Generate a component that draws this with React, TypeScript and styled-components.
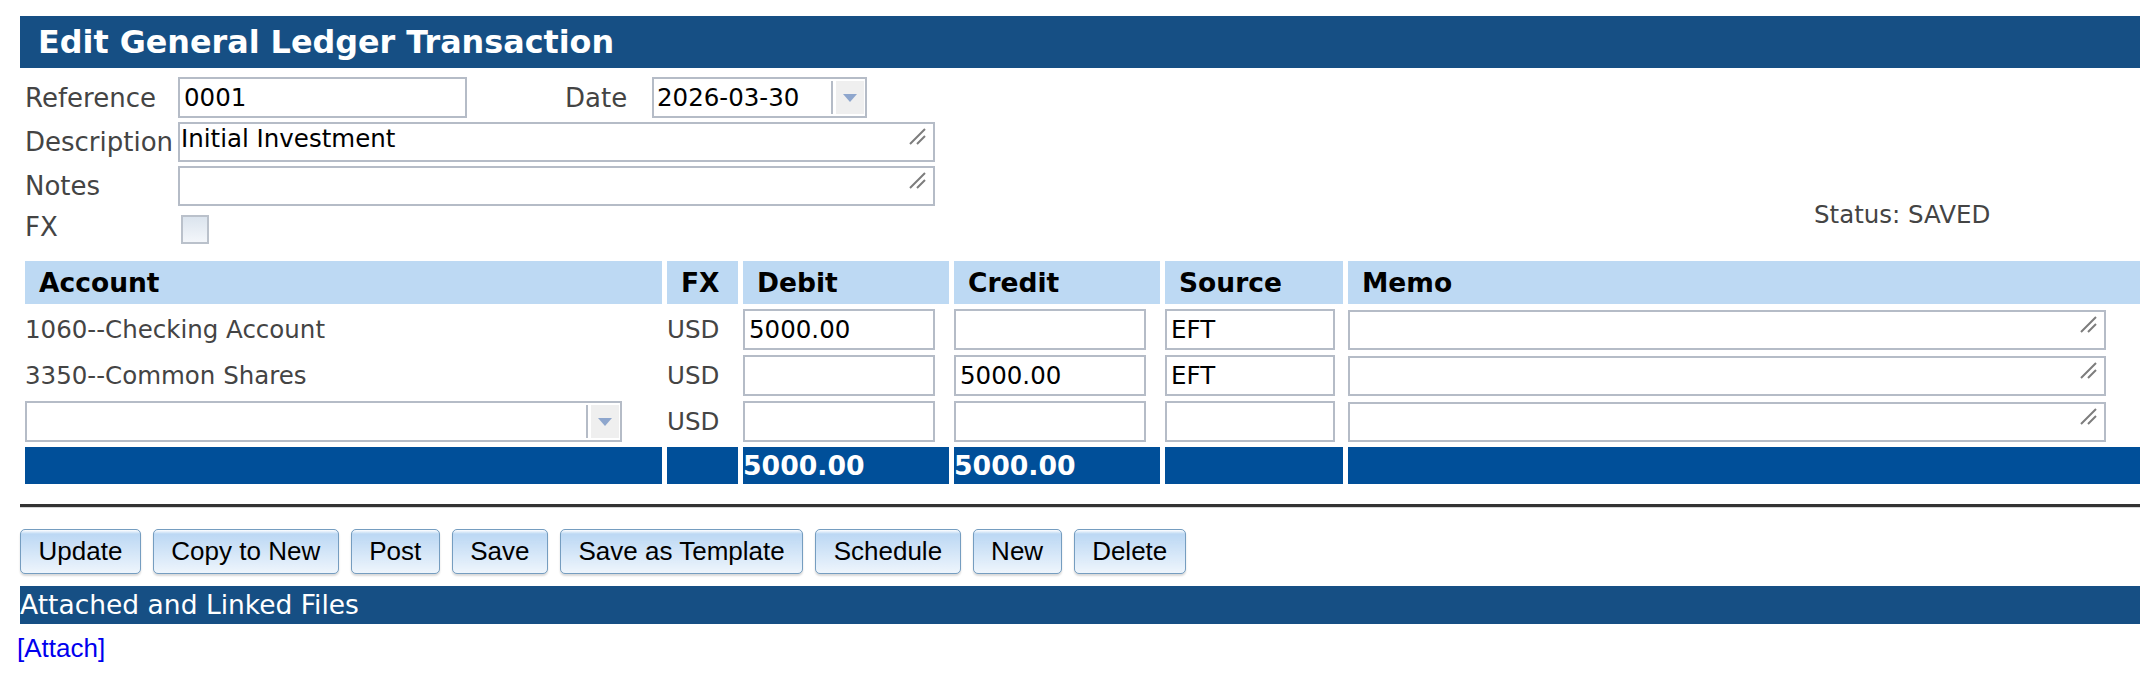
import styled, { createGlobalStyle } from "styled-components";

const GlobalStyle = createGlobalStyle`
  html, body {
    margin: 0;
    padding: 0;
    overflow: hidden;
    background: #fff;
  }
  body {
    font-family: "DejaVu Sans", Verdana, sans-serif;
  }
`;

type Line = {
  account: string | null;
  debit: string;
  credit: string;
  source: string;
};

const lines: Line[] = [
  { account: "1060--Checking Account", debit: "5000.00", credit: "", source: "EFT" },
  { account: "3350--Common Shares", debit: "", credit: "5000.00", source: "EFT" },
  { account: null, debit: "", credit: "", source: "" },
];

const buttons = ["Update", "Copy to New", "Post", "Save", "Save as Template", "Schedule", "New", "Delete"];

function Grip() {
  return (
    <GripIcon width="18" height="18" viewBox="0 0 18 18">
      <path d="M2 17 L17 2 M9 17 L17 9" stroke="#7d7d7d" strokeWidth="2" fill="none" />
    </GripIcon>
  );
}

function DownArrow() {
  return (
    <svg width="14" height="8" viewBox="0 0 14 8">
      <path d="M0 0 H14 L7 8 Z" fill="#8ea6cd" />
    </svg>
  );
}

function Combo({ width, value }: { width: number; value?: string }) {
  return (
    <ComboBox $width={width}>
      <ComboInput defaultValue={value} />
      <ArrowButton>
        <DownArrow />
      </ArrowButton>
    </ComboBox>
  );
}

function Area({ width, value }: { width: number; value?: string }) {
  return (
    <AreaWrap $width={width}>
      <TextArea defaultValue={value} />
      <Grip />
    </AreaWrap>
  );
}

export default function App() {
  return (
    <Page>
      <GlobalStyle />
      <TitleBar>Edit General Ledger Transaction</TitleBar>

      <Form>
        <Fields>
          <Label>Reference</Label>
          <FieldRow>
            <TextBox $width={289} defaultValue="0001" />
            <DateLabel>Date</DateLabel>
            <Combo width={215} value="2026-03-30" />
          </FieldRow>
          <Label>Description</Label>
          <Area width={757} value="Initial Investment" />
          <Label>Notes</Label>
          <Area width={757} />
          <Label>FX</Label>
          <CheckBox />
        </Fields>
        <Status>Status: SAVED</Status>
      </Form>

      <Lines>
        <colgroup>
          <col style={{ width: 637 }} />
          <col style={{ width: 71 }} />
          <col style={{ width: 206 }} />
          <col style={{ width: 206 }} />
          <col style={{ width: 178 }} />
          <col />
        </colgroup>
        <thead>
          <tr>
            <HeadCell>Account</HeadCell>
            <HeadCell>FX</HeadCell>
            <HeadCell>Debit</HeadCell>
            <HeadCell>Credit</HeadCell>
            <HeadCell>Source</HeadCell>
            <HeadCell>Memo</HeadCell>
          </tr>
        </thead>
        <tbody>
          {lines.map((line, i) => (
            <tr key={i}>
              <Cell>{line.account ?? <Combo width={597} />}</Cell>
              <Cell>USD</Cell>
              <Cell>
                <TextBox $width={192} defaultValue={line.debit} />
              </Cell>
              <Cell>
                <TextBox $width={192} defaultValue={line.credit} />
              </Cell>
              <Cell>
                <TextBox $width={170} defaultValue={line.source} />
              </Cell>
              <Cell>
                <Area width={758} />
              </Cell>
            </tr>
          ))}
          <tr>
            <TotalCell />
            <TotalCell />
            <TotalCell>5000.00</TotalCell>
            <TotalCell>5000.00</TotalCell>
            <TotalCell />
            <TotalCell />
          </tr>
        </tbody>
      </Lines>

      <Rule />

      <ButtonBar>
        {buttons.map((b) => (
          <Button key={b}>{b}</Button>
        ))}
      </ButtonBar>

      <SectionBar>Attached and Linked Files</SectionBar>
      <AttachLink href="#">[Attach]</AttachLink>
    </Page>
  );
}

const Page = styled.div`
  width: 2200px;
  box-sizing: border-box;
  padding: 16px 0 0 20px;
`;

const TitleBar = styled.h1`
  margin: 0;
  height: 52px;
  padding-left: 18px;
  background: #164f84;
  color: #fff;
  font-family: "DejaVu Sans", Verdana, sans-serif;
  font-size: 31.8px;
  font-weight: bold;
  line-height: 52px;
`;

const Form = styled.div`
  display: flex;
  margin-top: 9px;
`;

const Fields = styled.div`
  display: grid;
  grid-template-columns: 153px auto;
  row-gap: 4px;
  align-items: center;
  padding-left: 5px;
`;

const Label = styled.label`
  font-size: 26px;
  color: #444;
  white-space: nowrap;
`;

const FieldRow = styled.div`
  display: flex;
  align-items: center;
`;

const DateLabel = styled.label`
  width: 87px;
  margin-left: 98px;
  font-size: 26px;
  color: #444;
`;

const TextBox = styled.input<{ $width: number }>`
  width: ${(p) => p.$width}px;
  height: 41px;
  box-sizing: border-box;
  border: 2px solid #b5bcc7;
  padding: 0 4px;
  margin: 0;
  font-family: "DejaVu Sans", Verdana, sans-serif;
  font-size: 24.5px;
  color: #000;
  background: #fff;
  outline: none;
`;

const ComboBox = styled.div<{ $width: number }>`
  display: flex;
  width: ${(p) => p.$width}px;
  height: 41px;
  box-sizing: border-box;
  border: 2px solid #b5bcc7;
  background: #fff;
`;

const ComboInput = styled.input`
  flex: 1;
  min-width: 0;
  border: none;
  padding: 0 3px;
  margin: 0;
  font-family: "DejaVu Sans", Verdana, sans-serif;
  font-size: 24.5px;
  color: #000;
  outline: none;
`;

const ArrowButton = styled.div`
  display: flex;
  align-items: center;
  justify-content: center;
  width: 28px;
  margin: 2px 1px 2px 0;
  border-left: 2px solid #b5bcc7;
  padding-left: 3px;
  background: #efefef;
  background-clip: content-box;
`;

const AreaWrap = styled.div<{ $width: number }>`
  position: relative;
  width: ${(p) => p.$width}px;
  height: 40px;
`;

const TextArea = styled.textarea`
  display: block;
  width: 100%;
  height: 100%;
  box-sizing: border-box;
  border: 2px solid #b5bcc7;
  padding: 0 1px;
  margin: 0;
  resize: none;
  overflow: hidden;
  font-family: "DejaVu Sans", Verdana, sans-serif;
  font-size: 24.5px;
  color: #000;
  outline: none;
`;

const GripIcon = styled.svg`
  position: absolute;
  top: 5px;
  right: 9px;
`;

const CheckBox = styled.span`
  display: block;
  width: 28px;
  height: 29px;
  margin: 5px 0 0 3px;
  box-sizing: border-box;
  border: 2px solid #bac1cb;
  background: linear-gradient(#dbe4ee, #f3f6fa);
`;

const Status = styled.div`
  align-self: flex-end;
  margin: 0 0 14px 879px;
  font-size: 24.5px;
  line-height: 30px;
  color: #444;
`;

const Lines = styled.table`
  margin-top: 12px;
  width: 2180px;
  border-collapse: separate;
  border-spacing: 5px;
  table-layout: fixed;
`;

const HeadCell = styled.th`
  height: 43px;
  padding: 0 0 0 14px;
  background: #bdd9f3;
  text-align: left;
  font-size: 26.5px;
  font-weight: bold;
  color: #000;
`;

const Cell = styled.td`
  height: 41px;
  padding: 0;
  font-size: 24.5px;
  color: #444;
  white-space: nowrap;
`;

const TotalCell = styled.td`
  height: 37px;
  padding: 0;
  background: #004f99;
  color: #fff;
  font-size: 26.7px;
  font-weight: bold;
`;

const Rule = styled.div`
  margin-top: 15px;
  border-top: 3px solid #333;
  border-bottom: 1px solid #d6d6d6;
`;

const ButtonBar = styled.div`
  display: flex;
  gap: 12px;
  margin-top: 21px;
`;

const Button = styled.button`
  height: 45px;
  padding: 0 17.5px;
  border: 1px solid #759dc0;
  border-radius: 5px;
  background-color: #bcd8f4;
  background-image: linear-gradient(#ffffff 0px, rgba(255, 255, 255, 0) 4px, rgba(255, 255, 255, 0.75) 100%);
  box-shadow: 0 2px 2px rgba(0, 0, 0, 0.15);
  font-family: "Liberation Sans", Arial, sans-serif;
  font-size: 26px;
  color: #000;
`;

const SectionBar = styled.div`
  margin-top: 12px;
  height: 38px;
  background: #164f84;
  color: #fff;
  font-size: 26.5px;
  line-height: 38px;
`;

const AttachLink = styled.a`
  display: inline-block;
  margin: 9px 0 0 -3px;
  font-family: "Liberation Sans", Arial, sans-serif;
  font-size: 26px;
  line-height: 30px;
  color: #0000ee;
  text-decoration: none;
`;
